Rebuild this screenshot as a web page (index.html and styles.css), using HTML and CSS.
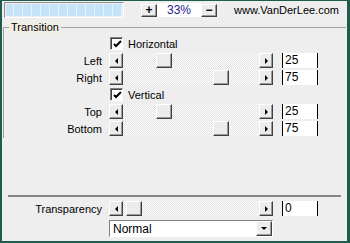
FILE: index.html
```html
<!DOCTYPE html>
<html>
<head>
<meta charset="utf-8">
<link rel="stylesheet" href="styles.css">
</head>
<body>
<div class="frame">
  <div class="topbar">
    <div class="progress"></div>
    <div class="btn plus">+</div>
    <div class="zoomval">33%</div>
    <div class="btn minus">&minus;</div>
    <div class="url">www.VanDerLee.com</div>
  </div>
  <fieldset class="group">
    <legend>Transition</legend>
    <div class="row">
      <div class="label"></div>
      <div class="check"><svg width="9" height="9" viewBox="0 0 9 9"><path d="M1 4 L3 6 L8 1" fill="none" stroke="#000" stroke-width="2"/></svg></div>
      <span class="checktext">Horizontal</span>
    </div>
    <div class="row">
      <div class="label">Left</div>
      <div class="scroll"><div class="sbtn left"><i></i></div><div class="track"><div class="thumb" style="margin-left:33px"></div></div><div class="sbtn right"><i></i></div></div>
      <div class="box">25</div>
    </div>
    <div class="row">
      <div class="label">Right</div>
      <div class="scroll"><div class="sbtn left"><i></i></div><div class="track"><div class="thumb" style="margin-left:90px"></div></div><div class="sbtn right"><i></i></div></div>
      <div class="box">75</div>
    </div>
    <div class="row">
      <div class="label"></div>
      <div class="check"><svg width="9" height="9" viewBox="0 0 9 9"><path d="M1 4 L3 6 L8 1" fill="none" stroke="#000" stroke-width="2"/></svg></div>
      <span class="checktext">Vertical</span>
    </div>
    <div class="row">
      <div class="label">Top</div>
      <div class="scroll"><div class="sbtn left"><i></i></div><div class="track"><div class="thumb" style="margin-left:33px"></div></div><div class="sbtn right"><i></i></div></div>
      <div class="box">25</div>
    </div>
    <div class="row">
      <div class="label">Bottom</div>
      <div class="scroll"><div class="sbtn left"><i></i></div><div class="track"><div class="thumb" style="margin-left:90px"></div></div><div class="sbtn right"><i></i></div></div>
      <div class="box">75</div>
    </div>
  </fieldset>
  <div class="sep"></div>
  <div class="row trans">
    <div class="label">Transparency</div>
    <div class="scroll"><div class="sbtn left"><i></i></div><div class="track"><div class="thumb" style="margin-left:3px"></div></div><div class="sbtn right"><i></i></div></div>
    <div class="box">0</div>
  </div>
  <div class="row drop">
    <div class="label"></div>
    <div class="select"><span>Normal</span><div class="sbtn down"><i></i></div></div>
  </div>
</div>
</body>
</html>
```
FILE: styles.css
```css
* { box-sizing: border-box; }
html, body { margin: 0; }
body {
  width: 350px;
  height: 243px;
  padding: 1px 3px 2px 2px;
  background: #1f5c4b;
  font: 11px "Liberation Sans", Arial, sans-serif;
  color: #000;
  overflow: hidden;
}
.frame {
  height: 240px;
  background: #eeeeee;
  display: flex;
  flex-direction: column;
}
.topbar {
  display: flex;
  align-items: center;
  height: 16px;
  margin-top: 1px;
}
.progress {
  margin-left: 2px;
  width: 120px;
  height: 16px;
  border-top: 1px solid #8c8c8c;
  border-left: 1px solid #8c8c8c;
  border-bottom: 1px solid #ffffff;
  border-right: 1px solid #ffffff;
  background: repeating-linear-gradient(90deg, #c4e3f8 0 8px, #e3f2fc 8px 9px);
  background-clip: content-box;
  padding: 1px;
}
.btn {
  width: 16px;
  height: 13px;
  background: #ececec;
  border-top: 1px solid #fff;
  border-left: 1px solid #fff;
  border-right: 1px solid #404040;
  border-bottom: 1px solid #404040;
  box-shadow: inset -1px -1px 0 #9a9a9a;
  display: flex;
  align-items: center;
  justify-content: center;
  font-weight: bold;
  font-size: 12px;
  line-height: 1;
}
.plus { margin-left: 17px; }
.zoomval {
  width: 44px;
  height: 14px;
  background: #fff;
  color: #1c1c8e;
  text-align: center;
  line-height: 14px;
  font-size: 12px;
}
.url {
  margin-left: 17px;
  font-size: 11px;
}
.group {
  margin: 3px 1px 0 1px;
  padding: 2px 0 0 0;
  border: none;
  border-top: 1px solid #a0a0a0;
  border-left: 1px solid #a0a0a0;
  min-width: 0;
}
.group legend {
  margin-left: 5px;
  padding: 0 2px;
  line-height: 13px;
  font-size: 11px;
  background: #f2f0e6;
}
.row {
  display: flex;
  align-items: center;
  height: 15px;
  margin-bottom: 2px;
}
.label {
  width: 98px;
  text-align: right;
  flex: none;
}
.trans .label, .drop .label { width: 100px; }
.check {
  margin-left: 8px;
  width: 13px;
  height: 13px;
  background: #fff;
  border-top: 1px solid #808080;
  border-left: 1px solid #808080;
  border-right: 1px solid #fff;
  border-bottom: 1px solid #fff;
  box-shadow: inset 1px 1px 0 #404040;
  display: flex;
  align-items: center;
  justify-content: center;
}
.check svg { margin: 1px 0 0 1px; }
.checktext { margin-left: 5px; }
.scroll {
  margin-left: 7px;
  width: 164px;
  height: 15px;
  display: flex;
  flex: none;
}
.track {
  flex: 1;
  height: 15px;
  background-image: repeating-conic-gradient(#ffffff 0 25%, #e2e2e2 0 50%);
  background-size: 2px 2px;
  display: flex;
}
.thumb {
  width: 16px;
  height: 15px;
  background: #ececec;
  border-top: 1px solid #fff;
  border-left: 1px solid #fff;
  border-right: 1px solid #404040;
  border-bottom: 1px solid #404040;
  box-shadow: inset -1px -1px 0 #9a9a9a;
}
.sbtn {
  width: 14px;
  height: 15px;
  background: #ececec;
  border-top: 1px solid #fff;
  border-left: 1px solid #fff;
  border-right: 1px solid #404040;
  border-bottom: 1px solid #404040;
  box-shadow: inset -1px -1px 0 #9a9a9a;
  display: flex;
  align-items: center;
  justify-content: center;
  flex: none;
}
.sbtn i { display: block; width: 0; height: 0; }
.sbtn.left i {
  border-top: 3px solid transparent;
  border-bottom: 3px solid transparent;
  border-right: 3px solid #000;
}
.sbtn.right i {
  border-top: 3px solid transparent;
  border-bottom: 3px solid transparent;
  border-left: 3px solid #000;
}
.sbtn.down i {
  border-left: 3px solid transparent;
  border-right: 3px solid transparent;
  border-top: 3px solid #000;
}
.box {
  margin-left: 9px;
  width: 36px;
  height: 15px;
  background: #fff;
  border-left: 1px solid #000;
  border-right: 1px solid #000;
  padding-left: 2px;
  line-height: 15px;
  font-size: 12px;
}
.sep {
  margin: 57px 6px 0 6px;
  height: 2px;
  background: #858585;
}
.trans { margin-top: 4px; }
.drop { margin-top: 2px; height: 17px; }
.select {
  margin-left: 7px;
  width: 164px;
  height: 17px;
  background: #fff;
  border-top: 1px solid #808080;
  border-left: 1px solid #808080;
  border-right: 1px solid #fff;
  border-bottom: 1px solid #fff;
  display: flex;
  align-items: center;
  justify-content: space-between;
  padding-left: 3px;
  font-size: 12px;
}
.select .sbtn { height: 15px; width: 16px; }
```
